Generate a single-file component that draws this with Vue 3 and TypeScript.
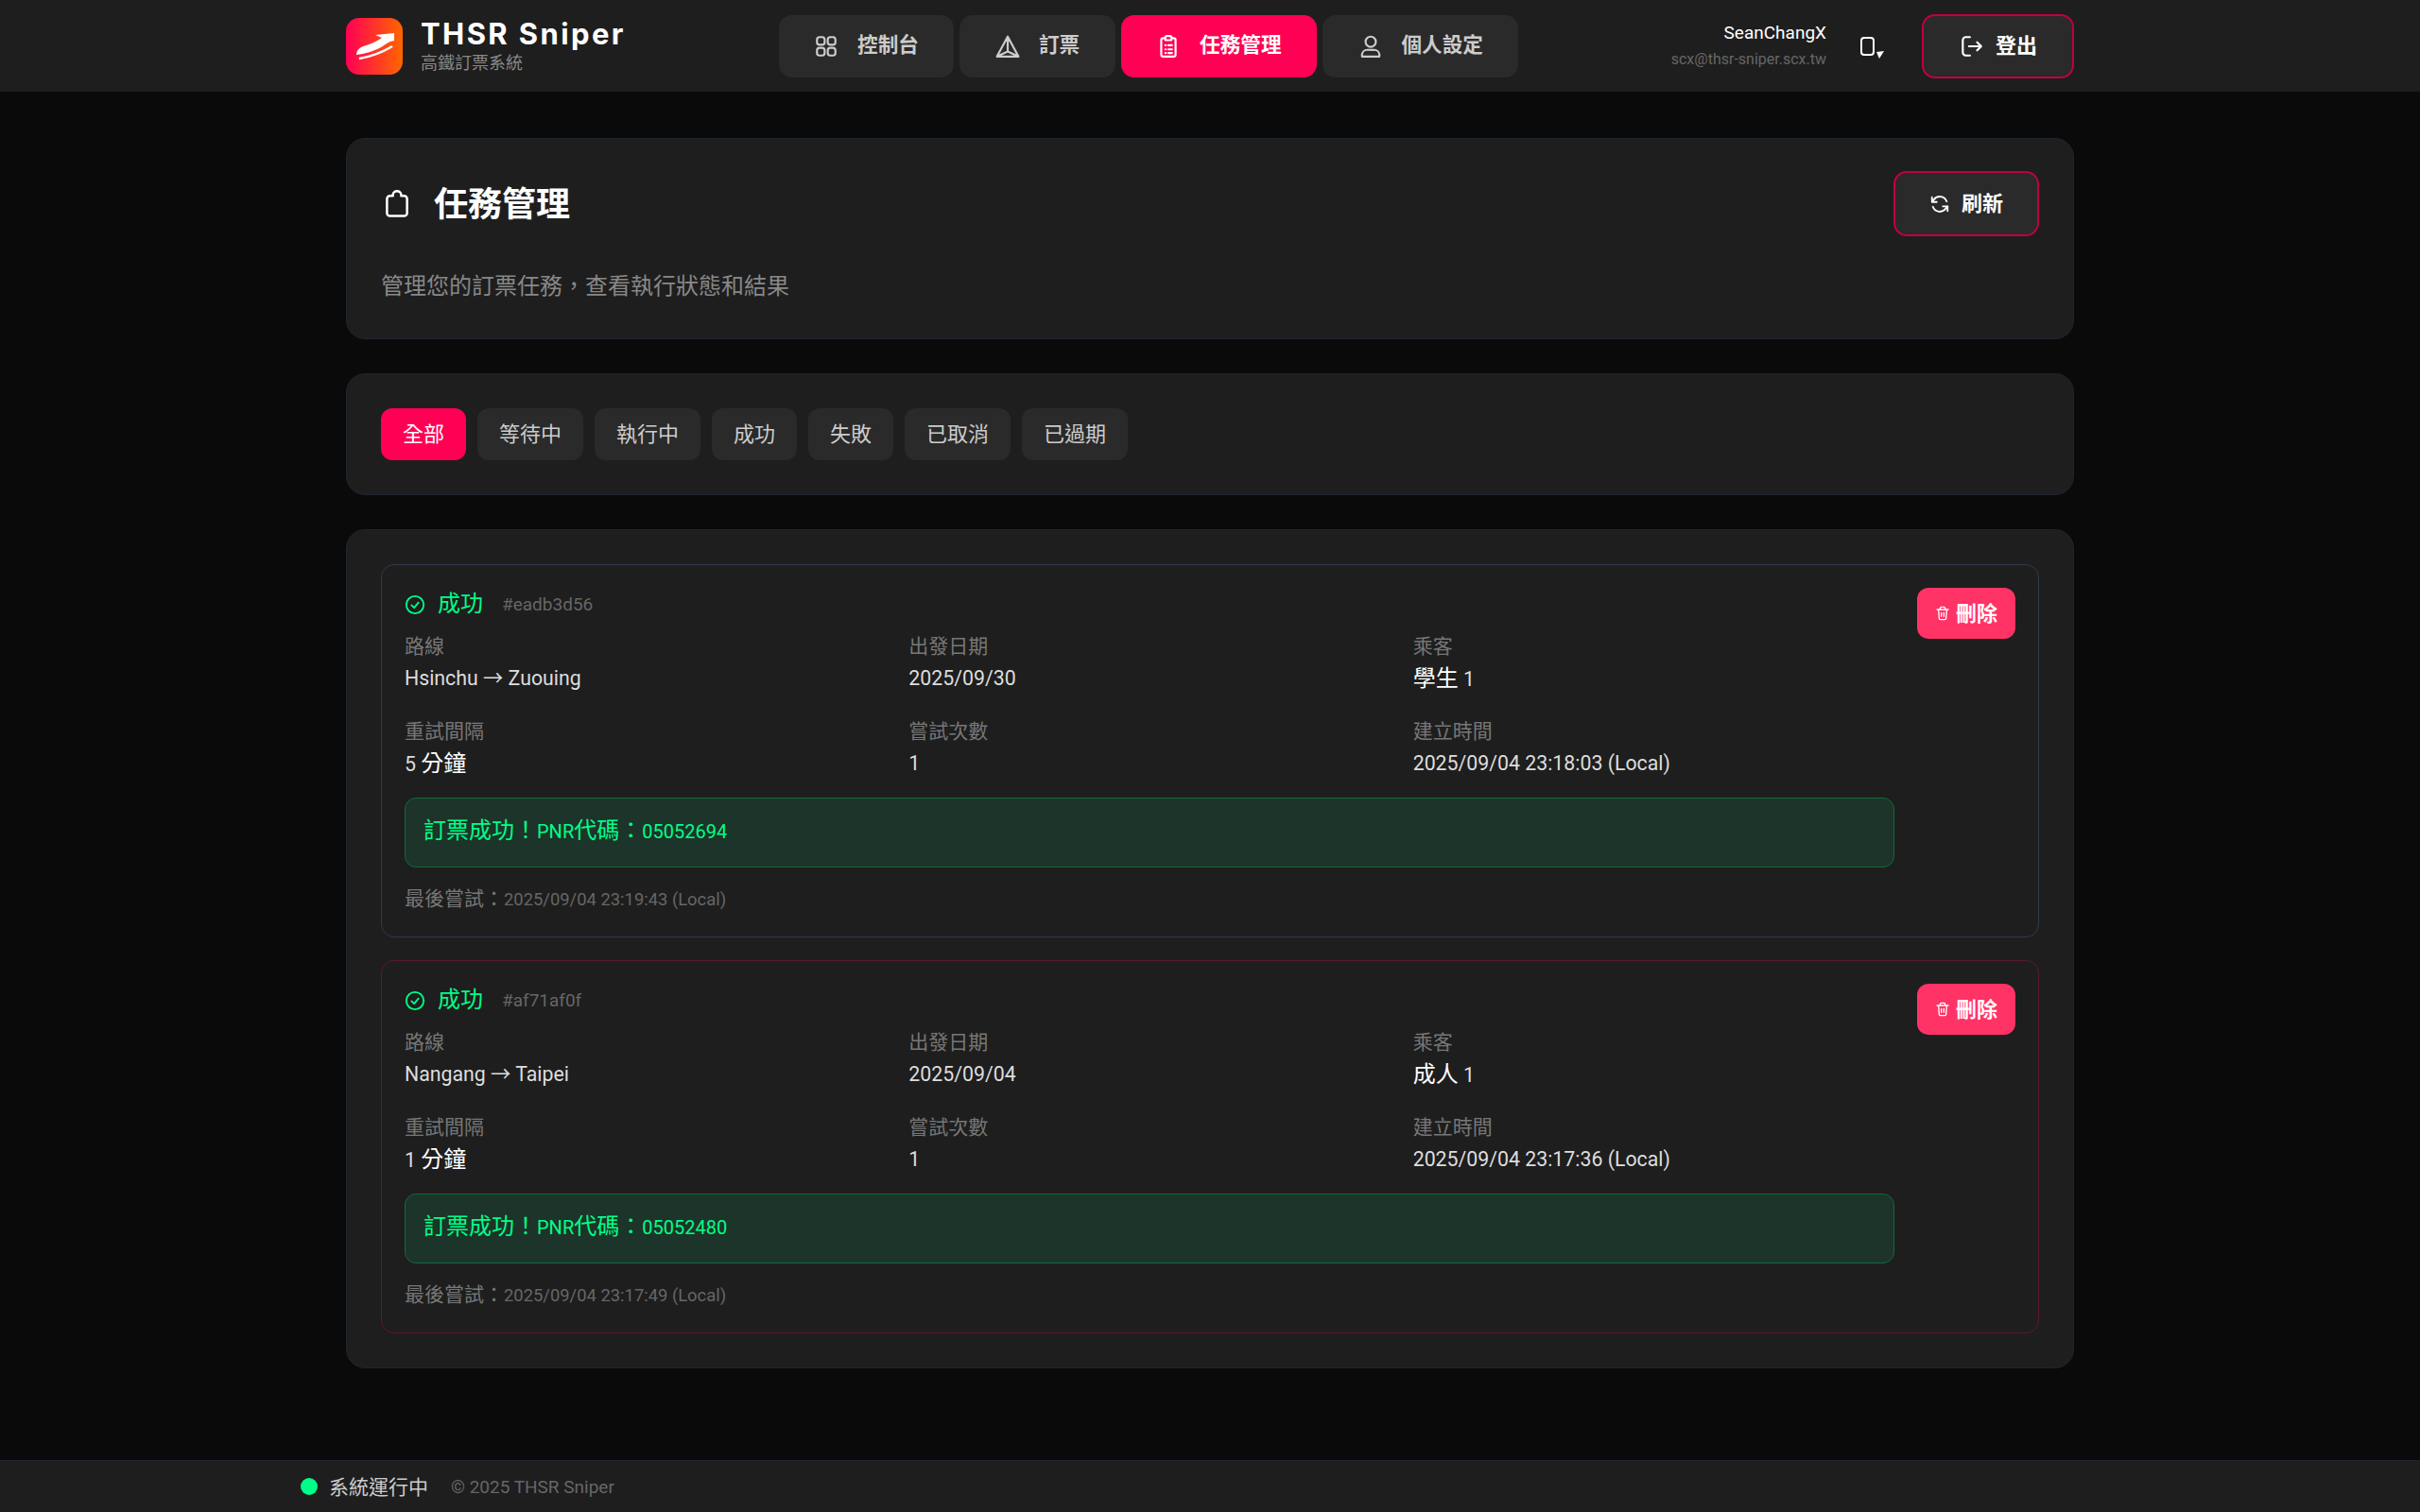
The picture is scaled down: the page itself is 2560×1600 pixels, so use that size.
<template>
  <div class="page">
    <header class="topbar">
      <div class="brand">
        <div class="logo">
          <svg viewBox="0 0 60 60" width="60" height="60">
            <path d="M11 38 C12 33 15 31 20 29.5 C27 27.5 33 24.5 38 21 L31 18 L51 16 L51 24 C45 25 42 28 37 31 C30 35 20 38 11 39 Z" fill="#fff" />
            <path d="M14 43 C26 41 39 36 49 30" stroke="#fff" stroke-width="2.4" fill="none" />
          </svg>
        </div>
        <div class="brand-text">
          <div class="brand-name">THSR Sniper</div>
          <div class="brand-sub">高鐵訂票系統</div>
        </div>
      </div>

      <nav class="nav">
        <button v-for="item in navItems" :key="item.label" class="nav-btn" :class="{ active: item.active }">
          <svg class="ico" viewBox="0 0 24 24" v-html="item.icon"></svg>
          <span class="lift">{{ item.label }}</span>
        </button>
      </nav>

      <div class="user-area">
        <div class="user-info">
          <div class="user-name">SeanChangX</div>
          <div class="user-mail">scx@thsr-sniper.scx.tw</div>
        </div>
        <svg class="device" viewBox="0 0 26 26">
          <rect x="1" y="4" width="13" height="18" rx="3" fill="none" stroke="#fff" stroke-width="2" />
          <path d="M17 19 L25 18 L20 26 Z" fill="#fff" />
        </svg>
        <button class="outline-btn logout">
          <svg class="ico" viewBox="0 0 24 24">
            <path d="M11 3 H7 a3 3 0 0 0-3 3 v12 a3 3 0 0 0 3 3 h4 M10 12 H22 M18 8 l4 4-4 4" />
          </svg>
          <span class="lift">登出</span>
        </button>
      </div>
    </header>

    <main class="main">
      <section class="panel head-panel">
        <div class="head-row">
          <h1 class="title">
            <svg class="title-ico" viewBox="0 0 24 24">
              <path d="M6 5 H8.5 V4 A3.5 3 0 0 1 15.5 4 V5 H18 A2.5 2.5 0 0 1 20.5 7.5 V19.5 A2.5 2.5 0 0 1 18 22 H6 A2.5 2.5 0 0 1 3.5 19.5 V7.5 A2.5 2.5 0 0 1 6 5 Z" />
            </svg>
            <span class="lift">任務管理</span>
          </h1>
          <button class="outline-btn refresh">
            <svg class="ico small" viewBox="0 0 24 24">
              <path d="M20 9 A8.5 8.5 0 0 0 5 7 L3 9.5 M3 4 V9.5 H8.5 M4 15 A8.5 8.5 0 0 0 19 17 L21 14.5 M21 20 V14.5 H15.5" />
            </svg>
            <span class="lift">刷新</span>
          </button>
        </div>
        <p class="subtitle">管理您的訂票任務，查看執行狀態和結果</p>
      </section>

      <section class="panel filter-panel">
        <button v-for="(f, i) in filters" :key="f" class="filter-btn" :class="{ active: i === 0 }">{{ f }}</button>
      </section>

      <section class="panel list-panel">
        <article v-for="task in tasks" :key="task.id" class="task" :class="task.tone">
          <div class="task-body">
            <div class="task-status">
              <svg class="status-ico" viewBox="0 0 24 24">
                <circle cx="12" cy="12" r="10" />
                <path d="M8 12.5 l3 3 5-6" />
              </svg>
              <span class="status-text">成功</span>
              <span class="task-id">#{{ task.id }}</span>
            </div>
            <div class="task-grid">
              <div class="cell">
                <div class="label">路線</div>
                <div class="value">{{ task.route }}</div>
              </div>
              <div class="cell">
                <div class="label">出發日期</div>
                <div class="value">{{ task.date }}</div>
              </div>
              <div class="cell">
                <div class="label">乘客</div>
                <div class="value"><span class="big">{{ task.passenger }}</span> 1</div>
              </div>
              <div class="cell">
                <div class="label">重試間隔</div>
                <div class="value">{{ task.interval }} <span class="big">分鐘</span></div>
              </div>
              <div class="cell">
                <div class="label">嘗試次數</div>
                <div class="value">1</div>
              </div>
              <div class="cell">
                <div class="label">建立時間</div>
                <div class="value">{{ task.created }}</div>
              </div>
            </div>
            <div class="result">訂票成功！<span class="result-code">PNR</span>代碼：<span class="result-code">{{ task.pnr }}</span></div>
            <div class="last-try">最後嘗試：<span class="last-time">{{ task.last }}</span></div>
          </div>
          <button class="del-btn">
            <svg class="del-ico" viewBox="0 0 24 24">
              <path d="M3 6 H21 M8 6 V4 A2 2 0 0 1 10 2 H14 A2 2 0 0 1 16 4 V6 M5.5 6 L6.5 20 A2 2 0 0 0 8.5 22 H15.5 A2 2 0 0 0 17.5 20 L18.5 6 M10 11 V17 M14 11 V17" />
            </svg>
            <span class="lift-small">刪除</span>
          </button>
        </article>
      </section>
    </main>

    <footer class="footer">
      <span class="dot"></span>
      <span class="sys">系統運行中</span>
      <span class="copy">© 2025 THSR Sniper</span>
    </footer>
  </div>
</template>

<script setup lang="ts">
interface Task {
  id: string
  tone: string
  route: string
  date: string
  passenger: string
  interval: number
  created: string
  pnr: string
  last: string
}

const navItems = [
  {
    label: '控制台',
    active: false,
    icon: '<rect x="3" y="3" width="7.5" height="7.5" rx="2.5"/><rect x="13.5" y="3" width="7.5" height="7.5" rx="2.5"/><rect x="3" y="13.5" width="7.5" height="7.5" rx="2.5"/><rect x="13.5" y="13.5" width="7.5" height="7.5" rx="2.5"/>',
  },
  {
    label: '訂票',
    active: false,
    icon: '<path d="M12 2.5 L22.5 22 H1.5 Z M12 2.5 V17 M1.5 22 L12 17 L22.5 22"/>',
  },
  {
    label: '任務管理',
    active: true,
    icon: '<path d="M9 4 H7 A2 2 0 0 0 5 6 V20 A2 2 0 0 0 7 22 H17 A2 2 0 0 0 19 20 V6 A2 2 0 0 0 17 4 H15 M9 3.5 A1.5 1.5 0 0 1 10.5 2 H13.5 A1.5 1.5 0 0 1 15 3.5 V6 H9 Z M9 11 H9.5 M12 11 H15.5 M9 15 H9.5 M12 15 H15.5 M9 18.5 H9.5 M12 18.5 H15.5"/>',
  },
  {
    label: '個人設定',
    active: false,
    icon: '<circle cx="12" cy="7.5" r="5"/><path d="M3.5 22 V20 A5 5 0 0 1 8.5 15.5 H15.5 A5 5 0 0 1 20.5 20 V22 Z"/>',
  },
]

const filters = ['全部', '等待中', '執行中', '成功', '失敗', '已取消', '已過期']

const tasks: Task[] = [
  {
    id: 'eadb3d56',
    tone: 'tone-blue',
    route: 'Hsinchu → Zuouing',
    date: '2025/09/30',
    passenger: '學生',
    interval: 5,
    created: '2025/09/04 23:18:03 (Local)',
    pnr: '05052694',
    last: '2025/09/04 23:19:43 (Local)',
  },
  {
    id: 'af71af0f',
    tone: 'tone-red',
    route: 'Nangang → Taipei',
    date: '2025/09/04',
    passenger: '成人',
    interval: 1,
    created: '2025/09/04 23:17:36 (Local)',
    pnr: '05052480',
    last: '2025/09/04 23:17:49 (Local)',
  },
]
</script>

<style>
html,
body {
  margin: 0;
  background: #0a0a0a;
}
</style>

<style scoped>
.page {
  min-height: 100vh;
  display: flex;
  flex-direction: column;
  background: #0a0a0a;
  color: #fff;
  font-family: Roboto, "Noto Sans CJK TC", sans-serif;
}

.lift {
  padding-bottom: 6px;
}

.lift-small {
  padding-bottom: 5px;
}

.topbar {
  height: 97px;
  box-sizing: border-box;
  padding: 0 366px;
  display: flex;
  align-items: center;
  justify-content: space-between;
  background: #1e1e1e;
}

.brand {
  display: flex;
  align-items: center;
  gap: 19px;
  width: 400px;
}

.logo {
  width: 60px;
  height: 60px;
  flex: none;
  border-radius: 14px;
  background: linear-gradient(90deg, #ff0055, #ff6600);
}

.logo svg {
  display: block;
}

.brand-name {
  font-family: Inter, sans-serif;
  font-size: 31px;
  line-height: 36px;
  font-weight: 700;
  letter-spacing: 2.4px;
}

.brand-sub {
  font-size: 18px;
  line-height: 26px;
  color: #888;
}

.nav {
  display: flex;
  gap: 6px;
}

.nav-btn {
  height: 66px;
  padding: 0 37.5px;
  display: flex;
  align-items: center;
  gap: 20px;
  border: 0;
  border-radius: 14px;
  background: #2a2a2a;
  color: #ccc;
  font-family: inherit;
  font-size: 21.6px;
  font-weight: 600;
}

.nav-btn.active {
  background: #ff0055;
  color: #fff;
}

.ico {
  width: 26px;
  height: 26px;
  fill: none;
  stroke: currentColor;
  stroke-width: 2;
  stroke-linecap: round;
  stroke-linejoin: round;
  flex: none;
}

.ico.small {
  width: 22px;
  height: 22px;
}

.user-area {
  display: flex;
  align-items: center;
  width: 530px;
  justify-content: flex-end;
}

.user-info {
  text-align: right;
}

.user-name {
  font-size: 19px;
  line-height: 24px;
  font-weight: 400;
}

.user-mail {
  margin-top: 4px;
  font-size: 16px;
  line-height: 24px;
  color: #666;
}

.device {
  width: 26px;
  height: 26px;
  margin: 0 39px 0 36px;
}

.outline-btn {
  display: flex;
  align-items: center;
  justify-content: center;
  box-sizing: border-box;
  border: 2px solid #c00042;
  border-radius: 14px;
  background: #2a2a2a;
  color: #fff;
  font-family: inherit;
  font-size: 22px;
  font-weight: 600;
}

.logout {
  width: 161px;
  height: 68px;
  gap: 13px;
}

.main {
  flex: 1;
  padding: 49px 366px;
  display: flex;
  flex-direction: column;
  gap: 36px;
  background: #0a0a0a;
}

.panel {
  box-sizing: border-box;
  padding: 36px;
  border: 1px solid #1d2530;
  border-radius: 20px;
  background: #1e1e1e;
}

.head-panel {
  height: 213px;
  padding-top: 34px;
}

.head-row {
  display: flex;
  align-items: center;
  justify-content: space-between;
}

.title {
  margin: 0;
  display: flex;
  align-items: center;
  gap: 24px;
  font-size: 36px;
  font-weight: 700;
}

.title-ico {
  width: 30px;
  height: 30px;
  margin-left: 2px;
  fill: none;
  stroke: #fff;
  stroke-width: 2;
  stroke-linejoin: round;
}

.refresh {
  width: 154px;
  height: 69px;
  gap: 12px;
}

.subtitle {
  margin: 36px 0 0;
  font-size: 24px;
  line-height: 34px;
  color: #888;
}

.filter-panel {
  height: 129px;
  display: flex;
  align-items: flex-start;
  gap: 12px;
}

.filter-btn {
  height: 55px;
  padding: 0 23px 5px;
  border: 0;
  border-radius: 12px;
  background: #2a2a2a;
  color: #ccc;
  font-family: inherit;
  font-size: 22px;
}

.filter-btn.active {
  background: #ff0055;
  color: #fff;
}

.list-panel {
  display: flex;
  flex-direction: column;
  gap: 24px;
}

.task {
  box-sizing: border-box;
  height: 395px;
  display: flex;
  gap: 24px;
  padding: 24px;
  border: 1px solid #2f3a4a;
  border-radius: 14px;
}

.task.tone-red {
  border-color: #5c1830;
}

.task-body {
  flex: 1;
  min-width: 0;
}

.task-status {
  display: flex;
  align-items: center;
  height: 32px;
  margin-top: 2px;
}

.status-ico {
  width: 22px;
  height: 22px;
  fill: none;
  stroke: #00ff88;
  stroke-width: 2;
  stroke-linecap: round;
  stroke-linejoin: round;
  margin-right: 13px;
}

.status-text {
  font-size: 24px;
  color: #00ff88;
  margin-right: 20px;
  padding-bottom: 7px;
}

.task-id {
  font-size: 19px;
  color: #666;
  padding-bottom: 2px;
}

.task-grid {
  margin-top: 13px;
  display: grid;
  grid-template-columns: repeat(3, 1fr);
  column-gap: 24px;
  row-gap: 20px;
}

.cell {
  height: 70px;
}

.label {
  font-size: 21px;
  line-height: 30px;
  color: #777;
}

.value {
  margin-top: 2px;
  font-size: 21.3px;
  line-height: 34px;
  color: #ddd;
}

.big {
  font-size: 24px;
  color: #fff;
}

.result {
  margin-top: 15px;
  height: 74px;
  box-sizing: border-box;
  padding: 0 19px;
  border: 1px solid #14683f;
  border-radius: 12px;
  background: #1c3429;
  color: #00ff88;
  font-size: 24px;
  line-height: 68px;
}

.result-code {
  font-size: 20px;
}

.last-try {
  margin-top: 18px;
  font-size: 21px;
  line-height: 30px;
  color: #777;
}

.last-time {
  font-size: 18.4px;
  color: #666;
}

.del-btn {
  width: 104px;
  height: 54px;
  flex: none;
  display: flex;
  align-items: center;
  justify-content: center;
  gap: 6px;
  border: 0;
  border-radius: 12px;
  background: #ff3366;
  color: #fff;
  font-family: inherit;
  font-size: 22px;
  font-weight: 600;
}

.del-ico {
  width: 16px;
  height: 16px;
  fill: none;
  stroke: #fff;
  stroke-width: 2;
  stroke-linecap: round;
  stroke-linejoin: round;
}

.footer {
  height: 55px;
  box-sizing: border-box;
  padding-left: 318px;
  display: flex;
  align-items: center;
  border-top: 1px solid #1d2530;
  background: #1e1e1e;
}

.dot {
  width: 18px;
  height: 18px;
  border-radius: 50%;
  background: #00ff88;
  margin-right: 12px;
}

.sys {
  font-size: 21px;
  color: #ccc;
  margin-right: 24px;
  padding-bottom: 3px;
}

.copy {
  font-size: 19px;
  color: #666;
}
</style>
